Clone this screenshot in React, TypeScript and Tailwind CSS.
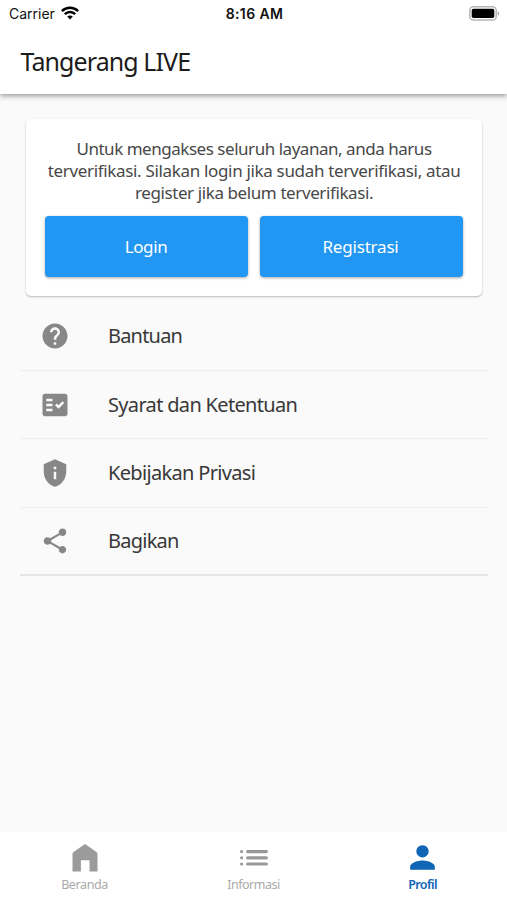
import { MdFactCheck, MdHelp, MdPerson, MdPrivacyTip, MdShare } from "react-icons/md";

const menuItems = [
  { label: "Bantuan", icon: MdHelp, tracking: "tracking-[-0.8px]" },
  { label: "Syarat dan Ketentuan", icon: MdFactCheck, tracking: "tracking-[-0.67px]" },
  { label: "Kebijakan Privasi", icon: MdPrivacyTip, tracking: "tracking-[-0.67px]" },
  { label: "Bagikan", icon: MdShare, tracking: "tracking-[-0.75px]" },
];

function WifiIcon() {
  return (
    <svg width="18" height="14" viewBox="0 0 18 14" fill="none" stroke="#000" strokeWidth="2.5">
      <path d="M0.9 5.1C5.3 0.6 12.7 0.6 17.1 5.1" />
      <path d="M3.8 8.1C6.7 5.2 11.3 5.2 14.2 8.1" />
      <path d="M6.2 10.5C7.8 9 10.2 9 11.8 10.5L9 13.4Z" fill="#000" stroke="none" />
    </svg>
  );
}

function BatteryIcon() {
  return (
    <svg width="31" height="15" viewBox="0 0 31 15">
      <rect x="0.8" y="0.8" width="26.4" height="13.2" rx="3.6" fill="#fff" stroke="#b5b5b5" strokeWidth="1.5" />
      <rect x="2.7" y="2.7" width="22.6" height="9.4" rx="1.8" fill="#000" />
      <path d="M28.7 5.2C30.6 5.9 30.6 8.9 28.7 9.6Z" fill="#a5a5a5" />
    </svg>
  );
}

function HomeIcon() {
  return (
    <svg width="26" height="28" viewBox="0 0 25 28" fill="#9b9b9b">
      <path d="M12.5 0L24 8Q25 8.8 25 10V27.5H17V16.3H8.4V27.5H0V10Q0 8.8 1 8Z" />
    </svg>
  );
}

function ListIcon() {
  return (
    <svg width="28" height="16" viewBox="0 0 28 16" fill="#999">
      <rect x="0" y="0" width="3.2" height="3.2" rx="1.6" />
      <rect x="6" y="0" width="22" height="3.2" rx="1.6" />
      <rect x="0" y="6.2" width="3.2" height="3.2" rx="1.6" />
      <rect x="6" y="6.2" width="22" height="3.2" rx="1.6" />
      <rect x="0" y="12.4" width="3.2" height="3.2" rx="1.6" />
      <rect x="6" y="12.4" width="22" height="3.2" rx="1.6" />
    </svg>
  );
}

export default function App() {
  return (
    <div className="flex h-[900px] w-[507px] flex-col overflow-hidden bg-[#fafafa] font-['Noto_Sans',sans-serif]">
      <header className="z-10 h-[94px] shrink-0 bg-white shadow-[0_2px_5px_rgba(0,0,0,0.38)]">
        <div className="grid h-[26px] grid-cols-3 items-center pr-[7px] pl-[9px] font-['Inter',sans-serif] text-[14px] text-[#111]">
          <div className="flex items-center gap-[6px]">
            <span>Carrier</span>
            <WifiIcon />
          </div>
          <span className="text-center font-semibold tracking-[0.4px] whitespace-nowrap">8:16 AM</span>
          <div className="flex justify-end">
            <BatteryIcon />
          </div>
        </div>
        <h1 className="mt-[17px] pl-[20.5px] text-[25px] leading-[36px] tracking-[-0.92px] text-[#1c1c1c]">
          Tangerang LIVE
        </h1>
      </header>

      <main className="flex-1 pr-[19px] pl-5 pt-[25px]">
        <section className="mr-[6px] ml-[6px] h-[177px] rounded-[5px] bg-white px-[19px] pt-[19px] shadow-[0_1px_2px_rgba(0,0,0,0.26)]">
          <div className="flex flex-col items-center text-[17px] leading-[22px] whitespace-nowrap text-[#484848]">
            <span className="tracking-[-0.47px]">Untuk mengakses seluruh layanan, anda harus</span>
            <span className="tracking-[-0.33px]">terverifikasi. Silakan login jika sudah terverifikasi, atau</span>
            <span className="tracking-[-0.4px]">register jika belum terverifikasi.</span>
          </div>
          <div className="mt-[12px] grid grid-cols-2 gap-[12px]">
            <button className="h-[61px] rounded-[4px] bg-[#2196f3] pr-px text-[17px] tracking-[-0.4px] text-white shadow-[0_1px_3px_rgba(0,0,0,0.35)]">
              Login
            </button>
            <button className="h-[61px] rounded-[4px] bg-[#2196f3] pr-[2px] text-[17px] tracking-[-0.2px] text-white shadow-[0_1px_3px_rgba(0,0,0,0.35)]">
              Registrasi
            </button>
          </div>
        </section>

        <ul className="mt-[6.6px]">
          {menuItems.map(({ label, icon: Icon, tracking }) => (
            <li
              key={label}
              className="flex h-[68.4px] items-center border-b border-[#eee] pl-[20px] last:border-b-2 last:border-[#e6e6e6]"
            >
              <Icon size={30} color="#878787" />
              <span className={`ml-[38px] text-[20px] text-[#383838] ${tracking}`}>{label}</span>
            </li>
          ))}
        </ul>
      </main>

      <nav className="grid h-[68px] shrink-0 grid-cols-3 bg-white text-[12.5px] leading-[18px] text-[#aaa]">
        <div className="flex flex-col items-center">
          <div className="flex h-[44px] items-end pb-1">
            <HomeIcon />
          </div>
          <span className="tracking-[-0.4px]">Beranda</span>
        </div>
        <div className="flex flex-col items-center">
          <div className="flex h-[44px] items-end pb-[10px]">
            <ListIcon />
          </div>
          <span className="tracking-[-0.5px]">Informasi</span>
        </div>
        <div className="flex flex-col items-center font-semibold text-[#1065b5]">
          <div className="flex h-[44px] items-end">
            <MdPerson size={37} />
          </div>
          <span className="tracking-[-0.6px]">Profil</span>
        </div>
      </nav>
    </div>
  );
}
